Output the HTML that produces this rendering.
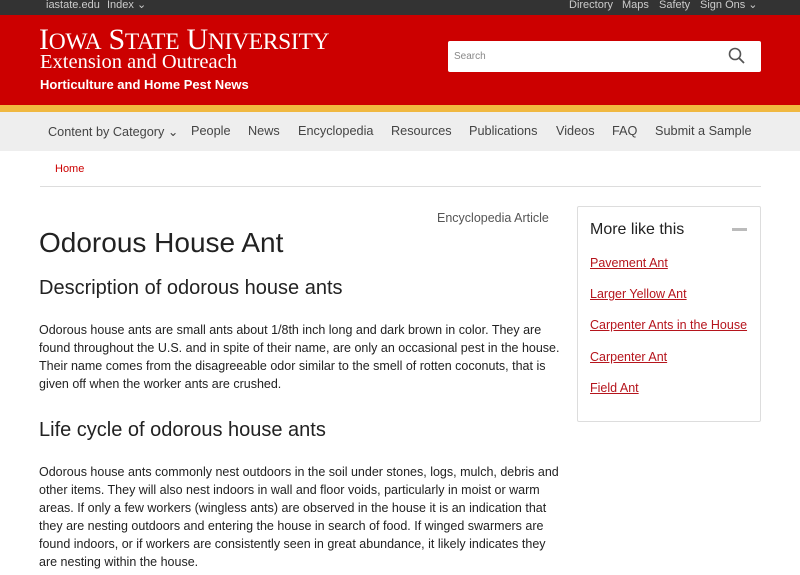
<!DOCTYPE html>
<html><head><meta charset="utf-8"><style>
*{margin:0;padding:0;box-sizing:border-box}
body{width:800px;height:575px;overflow:hidden;font-family:"Liberation Sans",Arial,sans-serif;background:#fff;color:#222;position:relative}
.top{position:absolute;left:0;top:0;width:800px;height:15px;background:#333;color:#ccc;font-size:11px;line-height:12px}
.top span{position:absolute;top:-1px}
.red{position:absolute;left:0;top:15px;width:800px;height:90px;background:#c00}
.yel{position:absolute;left:0;top:105px;width:800px;height:7px;background:#f0b840}
.nav{position:absolute;left:0;top:112px;width:800px;height:39px;background:#eee;color:#444;font-size:12.7px}
.nav span{position:absolute;top:12px}
.serif{font-family:"Liberation Serif",serif;color:#fff;position:absolute}
.search{position:absolute;left:448px;top:41px;width:313px;height:31px;background:#fff;border-radius:2px;font-size:10px;color:#888;padding:10px 6px}
p{font-size:12.5px;line-height:18px;color:#222}
a{color:#b5141c;text-decoration:underline}
</style></head><body>
<div class="top"><span style="left:46px">iastate.edu</span><span style="left:107px">Index ⌄</span><span style="left:569px">Directory</span><span style="left:622px">Maps</span><span style="left:659px">Safety</span><span style="left:700px">Sign Ons ⌄</span></div>
<div class="red">
<div class="serif" style="left:39px;top:8px;font-size:30px;letter-spacing:-0.3px">I<span style="font-size:23.5px">OWA</span> S<span style="font-size:23.5px">TATE</span> U<span style="font-size:23.5px">NIVERSITY</span></div>
<div class="serif" style="left:40px;top:36px;font-size:20.5px">Extension and Outreach</div>
<div style="position:absolute;left:40px;top:62px;font-size:13px;font-weight:bold;color:#fff">Horticulture and Home Pest News</div>
<div class="search" style="top:26px">Search
<svg style="position:absolute;right:15px;top:6px" width="18" height="18" viewBox="0 0 18 18"><circle cx="7" cy="7" r="5.5" fill="none" stroke="#555" stroke-width="1.6"/><line x1="11" y1="11" x2="16" y2="16" stroke="#555" stroke-width="1.8"/></svg></div>
</div>
<div class="yel"></div>
<div class="nav"><span style="left:48px">Content by Category ⌄</span><span style="left:191px">People</span><span style="left:248px">News</span><span style="left:298px">Encyclopedia</span><span style="left:391px">Resources</span><span style="left:469px">Publications</span><span style="left:556px">Videos</span><span style="left:612px">FAQ</span><span style="left:655px">Submit a Sample</span></div>
<div style="position:absolute;left:55px;top:163px;font-size:11px;color:#c00">Home</div>
<div style="position:absolute;left:40px;top:186px;width:721px;height:1px;background:#ddd"></div>
<div style="position:absolute;left:437px;top:211px;font-size:12.5px;color:#555">Encyclopedia Article</div>
<div style="position:absolute;left:39px;top:227px;font-size:28px;color:#222">Odorous House Ant</div>
<div style="position:absolute;left:39px;top:277px;font-size:20px;color:#222">Description of odorous house ants</div>
<p style="position:absolute;left:39px;top:321px;width:525px">Odorous house ants are small ants about 1/8th inch long and dark brown in color. They are found throughout the U.S. and in spite of their name, are only an occasional pest in the house. Their name comes from the disagreeable odor similar to the smell of rotten coconuts, that is given off when the worker ants are crushed.</p>
<div style="position:absolute;left:39px;top:419px;font-size:20px;color:#222">Life cycle of odorous house ants</div>
<p style="position:absolute;left:39px;top:463px;width:525px">Odorous house ants commonly nest outdoors in the soil under stones, logs, mulch, debris and other items. They will also nest indoors in wall and floor voids, particularly in moist or warm areas. If only a few workers (wingless ants) are observed in the house it is an indication that they are nesting outdoors and entering the house in search of food. If winged swarmers are found indoors, or if workers are consistently seen in great abundance, it likely indicates they are nesting within the house.</p>
<div style="position:absolute;left:577px;top:206px;width:184px;height:216px;border:1px solid #ddd;border-radius:2px">
<div style="position:absolute;left:12px;top:14px;font-size:16px;color:#222">More like this</div>
<div style="position:absolute;left:154px;top:21px;width:15px;height:3px;background:#bbb"></div>
<div style="position:absolute;left:12px;top:41px;font-size:12.5px;line-height:31.2px"><a>Pavement Ant</a><br><a>Larger Yellow Ant</a><br><a>Carpenter Ants in the House</a><br><a>Carpenter Ant</a><br><a>Field Ant</a></div>
</div>
</body></html>
